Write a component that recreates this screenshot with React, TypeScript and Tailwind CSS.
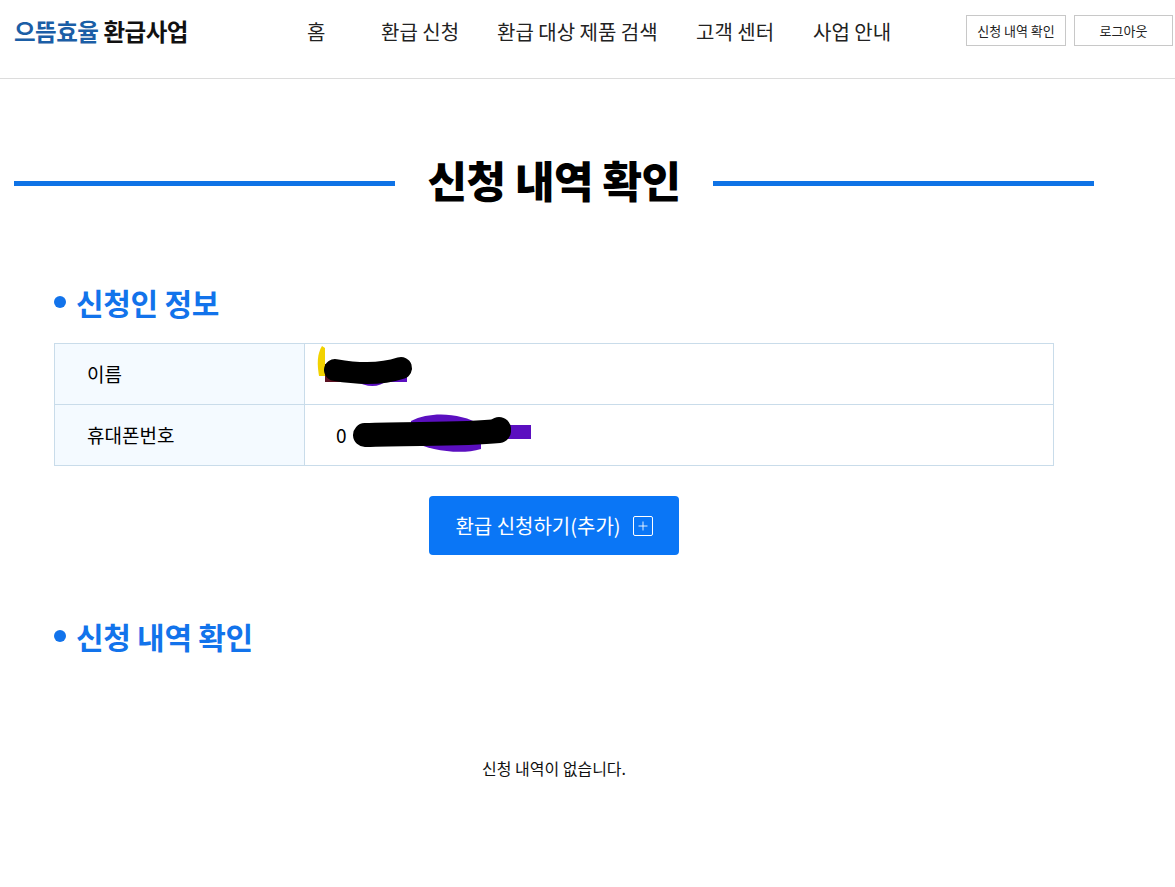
import { Plus } from "lucide-react"

const font = { fontFamily: '"Noto Sans CJK KR", "Noto Sans", sans-serif' }

const navItems = [
  { label: "홈", cls: "w-[74px]" },
  { label: "환급 신청", cls: "w-[116px]" },
  { label: "환급 대상 제품 검색", cls: "w-[199px]" },
  { label: "고객 센터", cls: "w-[117px]" },
  { label: "사업 안내", cls: "" },
]

function SectionTitle({ children }: { children: React.ReactNode }) {
  return (
    <h2 className="flex items-center gap-[10px] text-[30px] font-bold leading-none tracking-[-0.3px] text-[#1273eb]">
      <span className="w-[12px] h-[12px] rounded-full bg-[#1273eb]" />
      {children}
    </h2>
  )
}

function NameScribble() {
  return (
    <svg className="absolute left-[8px] top-0" width="110" height="48" viewBox="0 0 110 48">
      <path d="M9 2 C4 10 4 20 6 32 L12 32 L12 4 Z" fill="#f2d200" />
      <rect x="12" y="20" width="82" height="18" fill="#5b0fc0" />
      <rect x="12" y="20" width="20" height="18" fill="#5a1020" />
      <path d="M40 36 C55 44 65 44 75 36 Z" fill="#5b0fc0" />
      <path d="M22 26 C45 30 70 30 88 24" stroke="#000" strokeWidth="22" strokeLinecap="round" fill="none" />
    </svg>
  )
}

function PhoneScribble() {
  return (
    <svg className="absolute left-[46px] top-[6px]" width="180" height="46" viewBox="0 0 180 46">
      <path d="M60 10 C80 0 110 2 130 14 L60 14 Z" fill="#5b0fc0" />
      <path d="M60 30 C80 40 110 44 130 38 L130 30 Z" fill="#5b0fc0" />
      <rect x="150" y="14" width="30" height="14" fill="#5b0fc0" />
      <path d="M14 24 C60 22 110 24 148 20" stroke="#000" strokeWidth="24" strokeLinecap="round" fill="none" />
      <circle cx="148" cy="18" r="12" fill="#000" />
    </svg>
  )
}

export default function App() {
  return (
    <main className="min-h-screen bg-white text-black" style={font}>
      {/* 헤더 */}
      <header className="h-[79px] border-b border-[#dcdcdc]">
        <div className="flex items-center h-[63px] pl-[14px] pr-[2px]">
          <div className="w-[293px] text-[23.5px] font-bold tracking-[-0.5px]">
            <span className="text-[#1b5ea6]">으뜸효율</span>
            <span className="ml-[5px] text-[#111]">환급사업</span>
          </div>
          <nav className="flex items-center text-[20px] text-[#222]">
            {navItems.map((n) => (
              <a key={n.label} className={n.cls}>
                {n.label}
              </a>
            ))}
          </nav>
          <div className="ml-auto flex gap-[8px] -mt-[2px]">
            <button className="w-[100px] h-[31px] border border-[#c8c8c8] text-[13px] text-[#222]">
              신청 내역 확인
            </button>
            <button className="w-[99px] h-[31px] border border-[#c8c8c8] text-[13px] text-[#222]">
              로그아웃
            </button>
          </div>
        </div>
      </header>

      <div className="ml-[14px] w-[1080px]">
        {/* 페이지 제목 */}
        <div className="flex items-center mt-[72px]">
          <div className="flex-1 h-[5px] mt-[8px] bg-[#0f73e6]" />
          <h1 className="mx-[32px] text-[43px] font-black leading-[56px] tracking-[-0.5px]">
            신청 내역 확인
          </h1>
          <div className="flex-1 h-[5px] mt-[8px] bg-[#0f73e6]" />
        </div>

        <div className="px-[40px]">
          {/* 신청인 정보 */}
          <div className="mt-[80px]">
            <SectionTitle>신청인 정보</SectionTitle>
          </div>
          <table className="mt-[26px] w-[1000px] border-collapse text-[19px]">
            <tbody>
              <tr className="h-[61px]">
                <td className="w-[250px] border border-[#c9dcea] bg-[#f4faff] pl-[32px]">이름</td>
                <td className="relative border border-[#c9dcea] pl-[31px]">
                  <NameScribble />
                </td>
              </tr>
              <tr className="h-[61px]">
                <td className="border border-[#c9dcea] bg-[#f4faff] pl-[32px]">휴대폰번호</td>
                <td className="relative border border-[#c9dcea] pl-[31px]">
                  0
                  <PhoneScribble />
                </td>
              </tr>
            </tbody>
          </table>

          <div className="flex justify-center mt-[30px]">
            <button className="flex items-center justify-center gap-[12px] w-[250px] h-[59px] rounded-[4px] bg-[#0a76f6] text-white text-[20px]">
              환급 신청하기(추가)
              <span className="flex items-center justify-center w-[20px] h-[20px] rounded-[2px] border border-white">
                <Plus className="w-[14px] h-[14px]" strokeWidth={1.5} />
              </span>
            </button>
          </div>

          {/* 신청 내역 */}
          <div className="mt-[66px]">
            <SectionTitle>신청 내역 확인</SectionTitle>
          </div>
          <p className="mt-[105px] text-center text-[16px] text-[#111]">신청 내역이 없습니다.</p>
        </div>
      </div>
    </main>
  )
}
